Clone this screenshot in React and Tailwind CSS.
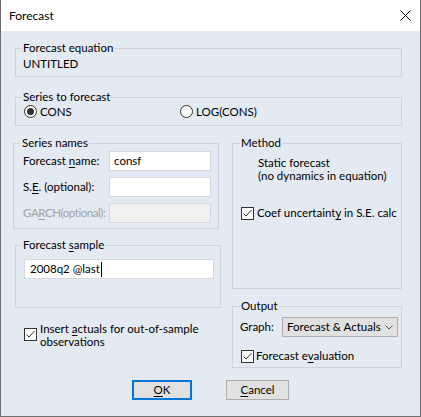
import React from "react";

function Check() {
  return (
    <span className="relative block w-[13px] h-[13px] flex-none border border-[#333333] bg-white">
      <svg className="absolute left-0 top-0" width="11" height="11" viewBox="0 0 11 11">
        <polyline points="1.5,5.5 4,8 9.5,2" fill="none" stroke="#333333" strokeWidth="1" />
      </svg>
    </span>
  );
}

function Radio({ on }) {
  return (
    <span className="w-[13px] h-[13px] flex-none rounded-full border border-[#333333] bg-white flex items-center justify-center">
      {on ? <span className="w-[7px] h-[7px] rounded-full bg-[#333333]" /> : null}
    </span>
  );
}

function Group({ label, className, labelLeft, children }) {
  return (
    <div className={"relative border border-[#cfd4da] " + className}>
      <span className={"absolute top-[-9px] px-[1px] bg-[#e4eaf2] leading-[16px] whitespace-nowrap " + labelLeft}>
        {label}
      </span>
      {children}
    </div>
  );
}

export default function App() {
  return (
    <div className="w-[421px] h-[417px] flex flex-col bg-[#e4eaf2] border-x border-b border-[#6e6e6e] font-[Lato,sans-serif] text-[11.5px] text-black leading-[16px]">
      <div className="h-[31px] flex-none bg-white flex items-center justify-between pl-[8px] pr-[9px]">
        <span className="text-[12px]">Forecast</span>
        <svg width="11" height="11" viewBox="0 0 11 11">
          <path d="M0.5 0.5 L10.5 10.5 M10.5 0.5 L0.5 10.5" stroke="#000000" strokeWidth="1" fill="none" />
        </svg>
      </div>

      <div className="flex flex-col">
        <Group label="Forecast equation" labelLeft="left-[6px]" className="mt-[17px] ml-[14px] w-[387px] h-[29px]">
          <div className="pl-[7px] pt-[7px]">UNTITLED</div>
        </Group>

        <Group label="Series to forecast" labelLeft="left-[6px]" className="mt-[20px] ml-[14px] w-[387px] h-[29px]">
          <div className="h-full flex items-center pl-[8px]">
            <div className="w-[156px] flex items-center gap-[3px]">
              <Radio on />
              <span>CONS</span>
            </div>
            <div className="flex items-center gap-[3px]">
              <Radio />
              <span>LOG(CONS)</span>
            </div>
          </div>
        </Group>

        <div className="mt-[17px] flex">
          <div className="ml-[12px] w-[208px] flex flex-col">
            <Group label="Series names" labelLeft="left-[7px]" className="w-[206px] h-[86px]">
              <div className="pt-[7px] pl-[9px] flex flex-col gap-[6px]">
                <div className="flex items-center h-[20px]">
                  <span className="w-[86px] whitespace-nowrap">
                    Forecast <u className="underline-offset-2">n</u>ame:
                  </span>
                  <div className="w-[102px] h-[20px] bg-white border border-[#d5d9de] pl-[4px] flex items-center">consf</div>
                </div>
                <div className="flex items-center h-[20px]">
                  <span className="w-[86px] whitespace-nowrap">
                    S.<u className="underline-offset-2">E</u>. (optional):
                  </span>
                  <div className="w-[102px] h-[20px] bg-white border border-[#d5d9de]" />
                </div>
                <div className="flex items-center h-[20px]">
                  <span className="w-[86px] whitespace-nowrap text-[#a3a3a3] tracking-[-0.45px]">
                    GA<u className="underline-offset-2">R</u>CH(optional):
                  </span>
                  <div className="w-[102px] h-[20px] bg-[#f0f0f0] border border-[#d5d9de]" />
                </div>
              </div>
            </Group>

            <Group label={<span>Forecast <u className="underline-offset-2">s</u>ample</span>} labelLeft="left-[6px]" className="ml-[2px] mt-[16px] w-[206px] h-[63px]">
              <div className="pt-[13px] pl-[8px]">
                <div className="w-[190px] h-[20px] bg-white border border-[#d5d9de] pl-[5px] flex items-center">
                  <span>2008q2 @last</span>
                  <span className="ml-[1px] w-[1px] h-[15px] bg-black" />
                </div>
              </div>
            </Group>

            <div className="mt-[14px] ml-[11px] flex items-start gap-[3px]">
              <div className="mt-[6px] flex-none">
                <Check />
              </div>
              <span className="leading-[13px]">
                Insert <u className="underline-offset-2">a</u>ctuals for out-of-sample
                <br />
                observations
              </span>
            </div>
          </div>

          <div className="ml-[11px] w-[170px] flex flex-col">
            <Group label="Method" labelLeft="left-[7px]" className="w-[170px] h-[146px]">
              <div className="pt-[12px] pl-[25px] leading-[13px]">
                Static forecast
                <br />
                (no dynamics in equation)
              </div>
              <div className="mt-[23px] pl-[8px] h-[16px] flex items-center gap-[3px] whitespace-nowrap">
                <Check />
                <span>
                  Coef uncertaint<u className="underline-offset-2">y</u> in S.E. calc
                </span>
              </div>
            </Group>

            <Group label="Output" labelLeft="left-[7px]" className="mt-[17px] w-[170px] h-[62px]">
              <div className="pt-[10px] pl-[7px] flex items-center">
                <span className="w-[42px]">Graph:</span>
                <div className="w-[116px] h-[20px] bg-[#e1e1e1] border border-[#adadad] flex items-center justify-between pl-[4px] pr-[4px]">
                  <span className="whitespace-nowrap">Forecast &amp; Actuals</span>
                  <svg width="8" height="5" viewBox="0 0 8 5">
                    <polyline points="0.5,0.5 4,4 7.5,0.5" fill="none" stroke="#555555" strokeWidth="1" />
                  </svg>
                </div>
              </div>
              <div className="mt-[11px] pl-[8px] h-[16px] flex items-center gap-[2px] whitespace-nowrap">
                <Check />
                <span>
                  Forecast e<u className="underline-offset-2">v</u>aluation
                </span>
              </div>
            </Group>
          </div>
        </div>

        <div className="mt-[12px] flex">
          <div className="ml-[131px] w-[60px] h-[20px] bg-[#e1e1e1] border-2 border-[#0078d7] flex items-center justify-center">
            <span>
              <u className="underline-offset-2">O</u>K
            </span>
          </div>
          <div className="ml-[34px] w-[63px] h-[20px] bg-[#e1e1e1] border border-[#adadad] flex items-center justify-center">
            <span>
              <u className="underline-offset-2">C</u>ancel
            </span>
          </div>
        </div>
      </div>
    </div>
  );
}
